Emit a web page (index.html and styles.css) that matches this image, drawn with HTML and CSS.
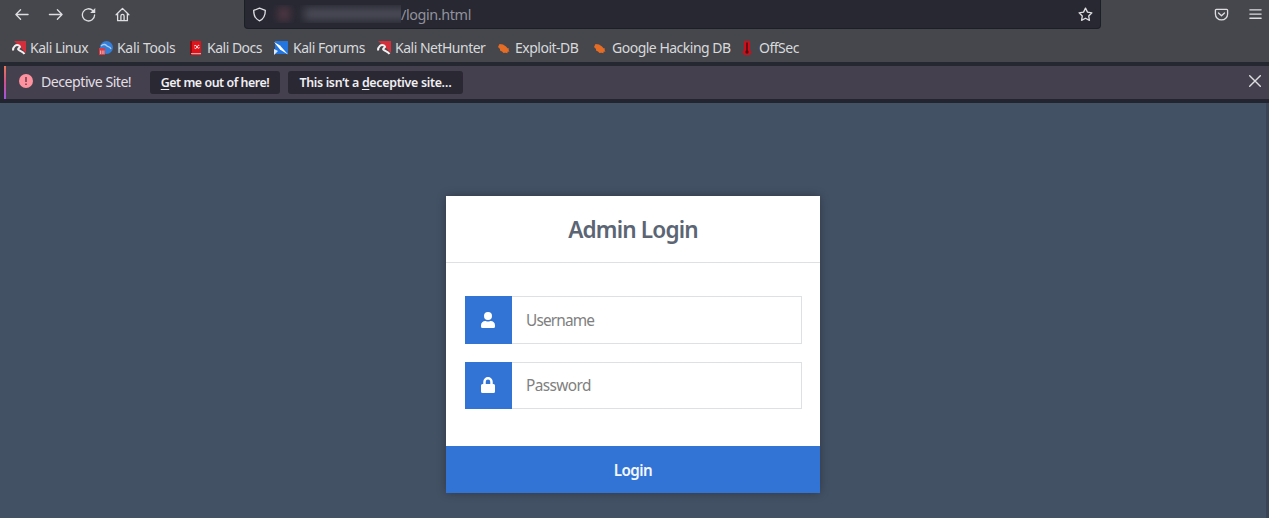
FILE: index.html
```html
<!DOCTYPE html>
<html lang="en">
<head>
<meta charset="utf-8">
<title>Admin Login</title>
<link rel="stylesheet" href="styles.css">
</head>
<body>
<header class="chrome">
  <div class="toolbar">
    <nav class="nav">
      <svg viewBox="0 0 16 16"><path d="M15 8H2M7 3L2 8l5 5"/></svg>
      <svg viewBox="0 0 16 16"><path d="M1.500 8H15M10 3l5 5-5 5"/></svg>
      <svg viewBox="0 0 16 16"><path d="M14.500 8.500A6.500 6.500 0 1 1 12.600 3.800"/><path class="solid" d="M15.200 1V6.500H9.700z"/></svg>
      <svg viewBox="0 0 16 16"><path d="M1.200 8.200L8 1.500l6.800 6.700M2.800 7.200V14.600H13.200V7.200M6.300 14.300V9.500a1.700 1.700 0 0 1 3.400 0V14.300"/></svg>
    </nav>
    <div class="urlbar">
      <svg viewBox="0 0 16 16"><path d="M8 1.300L14.200 3.700c0 5-1.500 9-6.200 11C3.300 12.700 1.800 8.700 1.800 3.700z"/></svg>
      <div class="redacted"><i class="smudge-red"></i><i class="smudge-grey"></i></div>
      <span class="path">/login.html</span>
      <svg class="star" viewBox="0 0 16 16"><path d="M8 1.200l2.100 4.300 4.700.7-3.400 3.300.8 4.700L8 12l-4.200 2.200.8-4.700L1.200 6.200l4.700-.7z"/></svg>
    </div>
    <div class="tools">
      <svg viewBox="0 0 16 16"><path d="M2.500 2.500h11a1 1 0 0 1 1 1V7.500a6.500 6.300 0 0 1-13 0V3.500a1 1 0 0 1 1-1zM4.800 6.300L8 9.300l3.200-3"/></svg>
      <svg viewBox="0 0 16 16"><path d="M2 3h12M2 7.500h12M2 12h12"/></svg>
    </div>
  </div>
  <div class="bookmarks">
    <a class="bm linux"><svg viewBox="0 0 14 14"><path fill="#d62e3b" d="M2 0h12v12L10 8z"/><path d="M1 9.500C1 5.500 4 3 7 4.500c3.500 2-2.500 2.500-.5 4.300 2 1.500 4.500 1.700 6 4.200" fill="none" stroke="#f4eeee" stroke-width="2"/></svg><span>Kali Linux</span></a>
    <a class="bm ktools"><svg viewBox="0 0 14 14"><circle cx="7.500" cy="6.500" r="6.500" fill="#347ed8"/><path d="M2 5c3-3 5-1 6 0s3 0 4 3" stroke="#a8cbf3" fill="none" stroke-width="1.300"/><path fill="#da3b43" d="M0 7h6v7H0z"/><path d="M1.500 13V9.500M3.200 13V9.500M4.900 13V9.500" stroke="#f6d7d9" stroke-width=".7"/></svg><span>Kali Tools</span></a>
    <a class="bm docs"><svg viewBox="0 0 14 14"><path fill="#e11219" d="M2 0h10v14H2z"/><path fill="#8c0c12" d="M1 0h2v14H1z"/><path d="M2 12.700h10" stroke="#e8bfc0"/><path d="M10.300 5C9.800 3.800 8.500 4.500 8 6s-1.500 2-2.500 1M5.200 5c1-1 2.300-.5 2.800.8s1.300 1.800 2.500.9" stroke="#fff" fill="none" stroke-width="1"/></svg><span>Kali Docs</span></a>
    <a class="bm forums"><svg viewBox="0 0 14 14"><path fill="#2376df" d="M1 0h13v13H1z"/><path d="M0 1l6 3.500 8 9-8-5z" fill="#fff"/><path d="M0 8l4 2-4 4z" fill="#dce9fb"/></svg><span>Kali Forums</span></a>
    <a class="bm hunter"><svg viewBox="0 0 14 14"><path fill="#d62e3b" d="M1 0h13v12L10 8z"/><path d="M1 9.500C1 5.500 4 3 7 4.500c3.500 2-2.500 2.500-.5 4.300 2 1.500 4.500 1.700 6 4.200" fill="none" stroke="#f4eeee" stroke-width="2"/></svg><span>Kali NetHunter</span></a>
    <a class="bm exploit"><svg viewBox="0 0 14 14"><path fill="#e46c25" d="M1 6l1.500-3L6 3.500l3 2 1.500 1.800 1.500.2-.5 1.500 1 1.500-2 .3v1.500l-2-.6-2 .3-1.500-1.500L3 9.500V8z"/></svg><span>Exploit-DB</span></a>
    <a class="bm ghdb"><svg viewBox="0 0 14 14"><path fill="#e46c25" d="M1 6l1.500-3L6 3.500l3 2 1.500 1.800 1.500.2-.5 1.500 1 1.500-2 .3v1.500l-2-.6-2 .3-1.500-1.500L3 9.500V8z"/></svg><span>Google Hacking DB</span></a>
    <a class="bm offsec"><svg viewBox="0 0 14 14"><path fill="#d00d19" d="M3 0h6v9l1.500 2-1.500 3H3l-1.500-3L3 9z"/><path d="M6 1.500v9" stroke="#4b1015" stroke-width="1.600"/><circle cx="6" cy="11" r="1.700" fill="#4b1015"/></svg><span>OffSec</span></a>
  </div>
  <div class="notice">
    <svg class="alert" viewBox="0 0 14 14"><circle cx="7" cy="7" r="7" fill="#ff929f"/><path d="M7 3v5M7 9.500v1.600" stroke="#673444" stroke-width="1.400"/></svg>
    <span class="notice-text">Deceptive Site!</span>
    <button class="nbtn leave"><u>G</u>et me out of here!</button>
    <button class="nbtn ignore">This isn’t a <u>d</u>eceptive site…</button>
    <svg class="close" viewBox="0 0 12 12"><path d="M.7.7l10.600 10.600M11.300.7L.7 11.300"/></svg>
  </div>
</header>
<main class="page">
  <form class="login">
    <h1>Admin Login</h1>
    <div class="fields">
      <label class="field">
        <span class="badge"><svg viewBox="0 0 448 512"><path d="M224 256a128 128 0 1 0 0-256 128 128 0 0 0 0 256zm89.600 32h-16.700a174 174 0 0 1-145.800 0h-16.700A134.400 134.400 0 0 0 0 422.400V464a48 48 0 0 0 48 48h352a48 48 0 0 0 48-48v-41.600A134.400 134.400 0 0 0 313.600 288z"/></svg></span>
        <input class="user" type="text" placeholder="Username">
      </label>
      <label class="field">
        <span class="badge"><svg viewBox="0 0 448 512"><path d="M400 224h-24v-72a152 152 0 0 0-304 0v72H48a48 48 0 0 0-48 48v192a48 48 0 0 0 48 48h352a48 48 0 0 0 48-48V272a48 48 0 0 0-48-48zm-104 0H152v-72a72 72 0 0 1 144 0z"/></svg></span>
        <input class="pass" type="password" placeholder="Password">
      </label>
    </div>
    <button class="submit" type="button">Login</button>
  </form>
</main>
</body>
</html>
```
FILE: styles.css
```css
* { box-sizing: border-box; }
body { margin: 0; height: 518px; overflow: hidden; display: flex; flex-direction: column; font-family: "Noto Sans", sans-serif; background: #435165; }
svg { display: block; flex: none; }
button { border: 0; padding: 0; font-family: inherit; }
.chrome { background: #45474d; height: 103px; flex: none; }
.toolbar { height: 30px; display: flex; align-items: flex-start; }
.toolbar svg, .close { fill: none; stroke: #dedee1; stroke-width: 1.4; stroke-linecap: round; stroke-linejoin: round; }
.toolbar svg .solid { fill: #dedee1; stroke: none; }
.nav { display: flex; gap: 18.700px; padding: 7px 0 0 14px; width: 244px; }
.nav svg, .tools svg { width: 15px; height: 15px; }
.urlbar { width: 857px; height: 29px; background: #272832; border: 1px solid #1d1f27; border-top: 0; border-radius: 0 0 4px 4px; display: flex; align-items: center; padding: 0 7px; }
.urlbar svg { width: 15px; height: 15px; }
.redacted { width: 134px; height: 18px; display: flex; align-items: center; padding-left: 11px; gap: 14px; overflow: hidden; }
.smudge-red { width: 12px; flex: none; height: 14px; background: #503844; filter: blur(4px); }
.smudge-grey { width: 110px; flex: none; height: 12px; background: #4b4c57; filter: blur(4px); }
.path { font-size: 14.400px; letter-spacing: -.4px; line-height: 20px; padding-top: 1px; color: #92929c; flex: 1; }
.tools { display: flex; gap: 19px; padding: 7px 0 0 113px; }
.bookmarks { height: 32px; display: flex; align-items: center; padding: 3px 0 0 12px; color: #d8d9db; font-size: 14px; letter-spacing: -.5px; }
.bm { display: flex; align-items: center; gap: 4px; white-space: nowrap; flex: none; }
.bm svg { width: 14px; height: 14px; }
.bm span { line-height: 18px; }
.linux { width: 87px; }
.ktools { width: 90px; letter-spacing: -.3px; }
.docs { width: 85px; }
.forums { width: 103px; gap: 5px; }
.hunter { width: 120px; }
.exploit { width: 96px; }
.ghdb { width: 148px; gap: 5px; }
.notice { height: 41px; border-top: 4px solid #252731; border-bottom: 4px solid #22252f; background: linear-gradient(#e87a57, #cf508e, #9e55e4) 4px 0 / 2px 100% no-repeat, linear-gradient(#272833, #272833) 0 0 / 4px 100% no-repeat, #44404e; display: flex; align-items: center; padding: 0 8px 1px 19px; }
.alert { width: 14px; height: 14px; margin-top: -3px; }
.notice-text { font-size: 14.200px; letter-spacing: -.52px; color: #e1dfe5; width: 110px; margin-left: 8px; margin-top: -1px; white-space: nowrap; }
.nbtn { height: 23px; border-radius: 3px; background: #2a2832; color: #f0eff3; font-size: 12.400px; letter-spacing: -.45px; font-weight: 600; white-space: nowrap; }
.nbtn u { text-underline-offset: 2px; }
.leave { width: 130px; margin-left: -1px; }
.ignore { width: 175px; margin-left: 8px; letter-spacing: -.3px; }
.close { width: 12px; height: 12px; margin: -3px 0 0 auto; }
.page { flex: 1; background: #435165; border-right: 3px solid #394557; padding-top: 93px; }
.login { width: 374px; height: 297px; margin-left: 446px; background: #fff; box-shadow: 0 0 9px rgba(0, 0, 0, .3); display: flex; flex-direction: column; }
h1 { margin: 0; height: 67px; border-bottom: 1px solid #dee0e4; text-align: center; color: #5b6574; font-size: 22.600px; letter-spacing: -.85px; line-height: 67px; font-weight: 600; }
.fields { flex: 1; padding: 33px 18px 0 19px; display: flex; flex-direction: column; gap: 18px; }
.field { display: flex; height: 47.500px; }
.badge { width: 47px; background: #3274d6; display: grid; place-items: center; }
.badge svg { width: 14px; height: 16px; fill: #fff; margin-right: 1px; }
input { flex: 1; min-width: 0; border: 1px solid #dee0e4; border-left: 0; padding: 1px 14px 0; font: 15.400px "Noto Sans", sans-serif; letter-spacing: -.85px; background: #fff; outline: 0; }
.pass { letter-spacing: -.6px; }
input::placeholder { color: #808080; opacity: 1; }
.submit { height: 47px; background: #3274d6; color: #f3f7fd; font-size: 15.200px; letter-spacing: -.5px; font-weight: 600; }
```
